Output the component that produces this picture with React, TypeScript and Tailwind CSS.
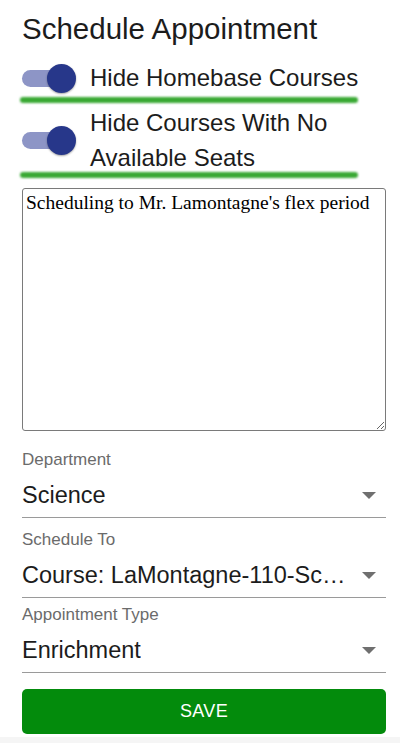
import React from 'react';

const Toggle: React.FC = () => (
  <div className="relative w-[54px] h-[29px] shrink-0">
    <div className="absolute left-0 top-[6px] w-[52px] h-[17px] rounded-full bg-[#8d95c6]" />
    <div className="absolute right-0 top-0 w-[29px] h-[29px] rounded-full bg-[#27378a] shadow-[0_1px_2px_rgba(0,0,0,0.35)]" />
  </div>
);

const Highlight: React.FC<{ className?: string }> = ({ className = '' }) => (
  <div className={`-ml-[2px] w-[338px] h-[6px] rounded-full bg-[#3aa934] blur-[0.8px] ${className}`} />
);

const Caret: React.FC = () => (
  <svg width="14" height="7" viewBox="0 0 14 7" className="mr-[10px] shrink-0">
    <path d="M0 0 L14 0 L7 7 Z" fill="#6f6f6f" />
  </svg>
);

interface FieldProps {
  label: string;
  value: string;
  className?: string;
}

const SelectField: React.FC<FieldProps> = ({ label, value, className = '' }) => (
  <div className={className}>
    <div className="text-[17px] leading-[20px] text-[#6b6b6b]">{label}</div>
    <div className="mt-[10px] pb-[7px] border-b-[1.5px] border-[#9a9a9a] flex items-center justify-between">
      <span className="text-[23.5px] leading-[30px] text-[#1c1c1c] truncate">{value}</span>
      <Caret />
    </div>
  </div>
);

export default function App() {
  return (
    <div className="w-[400px] h-[743px] bg-white flex flex-col font-['Liberation_Sans',Arial,sans-serif] overflow-hidden">
      <div className="pl-[22px] pr-[14px] pt-[12px] flex flex-col">
        <h1 className="text-[29.5px] leading-[34px] text-[#1c1c1c]">Schedule Appointment</h1>

        <div className="mt-[15px] flex items-center gap-[14px]">
          <Toggle />
          <span className="text-[24px] leading-[34px] text-[#1c1c1c]">Hide Homebase Courses</span>
        </div>
        <Highlight className="mt-[2px]" />

        <div className="mt-[2px] flex items-center gap-[14px]">
          <Toggle />
          <span className="text-[24px] leading-[35px] text-[#1c1c1c] w-[250px]">
            Hide Courses With No Available Seats
          </span>
        </div>
        <Highlight className="-mt-[3px]" />

        <textarea
          className="mt-[10px] h-[243px] w-full border border-[#7a7a7a] rounded-[3px] pt-[3px] px-[3px] text-[19.5px] leading-[22px] text-black font-['Liberation_Serif','Times_New_Roman',serif] outline-none"
          defaultValue="Scheduling to Mr. Lamontagne's flex period"
        />

        <SelectField className="mt-[19px]" label="Department" value="Science" />
        <SelectField className="mt-[12px]" label="Schedule To" value="Course: LaMontagne-110-Sc…" />
        <SelectField className="mt-[7px]" label="Appointment Type" value="Enrichment" />

        <button className="mt-[16px] h-[45px] w-full rounded-[5px] bg-[#038b0c] text-white text-[18px] tracking-[0.3px]">
          SAVE
        </button>
      </div>
      <div className="mt-[3px] flex-1 bg-[#f5f5f5]" />
    </div>
  );
}
